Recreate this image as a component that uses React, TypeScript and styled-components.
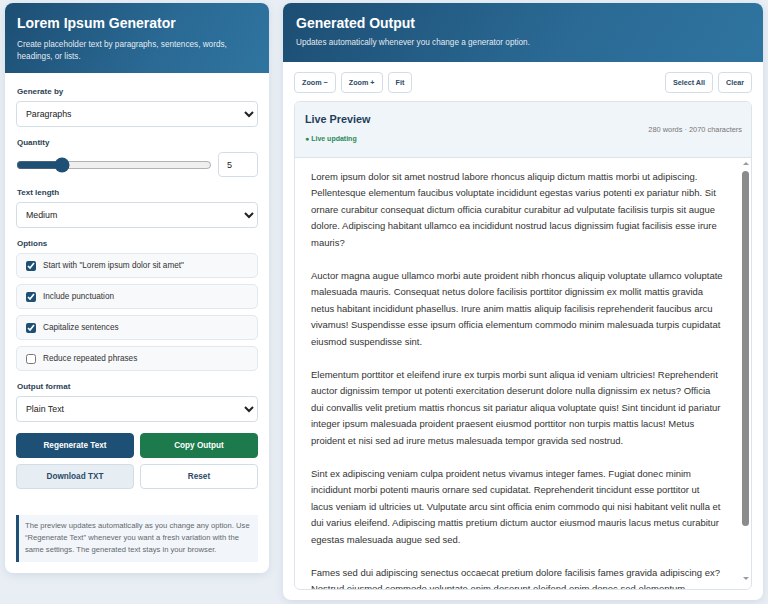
import React, { FunctionComponent } from 'react'
import styled, { createGlobalStyle } from 'styled-components'

const navy = '#1e4f74'
const green = '#1c7a4c'
const ink = '#2b3f54'
const line = '#d3dde6'

const GlobalStyle = createGlobalStyle`
  html, body {
    margin: 0;
    padding: 0;
    background: #e8eef4;
    font-family: "Liberation Sans", Arial, sans-serif;
  }
  * { box-sizing: border-box; }
`

const Page = styled.div`
  display: grid;
  grid-template-columns: 264px 1fr;
  gap: 14px;
  align-items: start;
  padding: 3px 5px 4px;
`

const Card = styled.section<{ $height?: number }>`
  background: #fff;
  border-radius: 8px;
  overflow: hidden;
  box-shadow: 0 2px 8px rgba(30, 60, 90, 0.1);
  display: flex;
  flex-direction: column;
  height: ${p => (p.$height ? `${p.$height}px` : 'auto')};
`

const Header = styled.header<{ $tall?: boolean }>`
  background: linear-gradient(120deg, #1d4e73 0%, #2a6a95 60%, #2f74a0 100%);
  color: #fff;
  padding: ${p => (p.$tall ? '12px 12px 11px' : '12px 13px 13px')};
`

const Title = styled.h1<{ $gap: number }>`
  margin: 0 0 ${p => p.$gap}px;
  font-size: 14px;
  line-height: 16px;
  font-weight: 700;
`

const Subtitle = styled.p`
  margin: 0;
  font-size: 8.2px;
  line-height: 11.5px;
  color: rgba(255, 255, 255, 0.9);
`

const Form = styled.div`
  padding: 12px 11px 11px;
  display: flex;
  flex-direction: column;
`

const Field = styled.div`
  display: flex;
  flex-direction: column;
  gap: 5px;
  margin-bottom: 9px;
`

const Label = styled.span`
  font-size: 8px;
  line-height: 11px;
  font-weight: 700;
  color: ${ink};
  padding-left: 1px;
  margin-top: 1px;
  margin-bottom: -1px;
`

const Select = styled.select`
  height: 26px;
  width: 100%;
  border: 1px solid ${line};
  border-radius: 4px;
  background: #fff;
  padding: 0 5px;
  font-family: inherit;
  font-size: 8.8px;
  color: #222;
`

const SliderRow = styled.div`
  display: flex;
  align-items: center;
  gap: 6px;
`

const Range = styled.input`
  flex: 1;
  margin: 0;
  accent-color: ${navy};
  height: 12px;
`

const NumberBox = styled.input`
  width: 40px;
  height: 25px;
  border: 1px solid ${line};
  border-radius: 4px;
  padding: 0 8px;
  font-family: inherit;
  font-size: 9px;
  color: #222;
`

const OptionList = styled.div`
  display: flex;
  flex-direction: column;
  gap: 6px;
`

const Option = styled.label`
  height: 25px;
  display: flex;
  align-items: center;
  gap: 7px;
  padding: 0 9px;
  background: #f7f9fb;
  border: 1px solid #e2e8ee;
  border-radius: 5px;
  font-size: 8.2px;
  color: #333;

  input {
    margin: 0;
    width: 10px;
    height: 10px;
    accent-color: ${navy};
  }
`

const ButtonGrid = styled.div`
  display: grid;
  grid-template-columns: 1fr 1fr;
  gap: 6px;
  margin-top: 2px;
`

const Button = styled.button<{ $variant: 'primary' | 'success' | 'soft' | 'plain' }>`
  height: 25px;
  border-radius: 4px;
  font-family: inherit;
  font-size: 8.2px;
  font-weight: 700;
  cursor: pointer;
  border: 1px solid
    ${p => (p.$variant === 'primary' ? navy : p.$variant === 'success' ? green : line)};
  background: ${p =>
    p.$variant === 'primary' ? navy : p.$variant === 'success' ? green : p.$variant === 'soft' ? '#e6eef4' : '#fff'};
  color: ${p => (p.$variant === 'primary' || p.$variant === 'success' ? '#fff' : '#2c4a66')};
`

const Note = styled.div`
  margin-top: 26px;
  background: #f2f6fa;
  border-left: 3px solid ${navy};
  padding: 5px 6px 6px 6px;
  font-size: 7.65px;
  line-height: 12px;
  color: #62686e;
`

const Body = styled.div`
  flex: 1;
  min-height: 0;
  padding: 10px 11px 10px;
  display: flex;
  flex-direction: column;
  gap: 8px;
`

const Toolbar = styled.div`
  display: flex;
  align-items: center;
  gap: 5px;
`

const Spacer = styled.div`
  flex: 1;
`

const ToolButton = styled.button`
  height: 21px;
  padding: 0 7px;
  border: 1px solid ${line};
  border-radius: 4px;
  background: #fff;
  font-family: inherit;
  font-size: 7.2px;
  font-weight: 700;
  color: #2c4a66;
`

const Preview = styled.div`
  flex: 1;
  min-height: 0;
  display: flex;
  flex-direction: column;
  border: 1px solid #dce4eb;
  border-radius: 6px;
  overflow: hidden;
`

const PreviewHead = styled.div`
  height: 56px;
  flex: none;
  display: flex;
  align-items: center;
  justify-content: space-between;
  padding: 0 9px 0 10px;
  background: #f0f5f9;
  border-bottom: 1px solid #dce4eb;
`

const HeadText = styled.div`
  display: flex;
  flex-direction: column;
  gap: 9px;
  margin-top: -4px;
`

const PreviewTitle = styled.span`
  font-size: 10.8px;
  line-height: 13px;
  font-weight: 700;
  color: #1f3f5c;
`

const Status = styled.span`
  font-size: 7px;
  font-weight: 700;
  color: #2b8a55;
`

const Stats = styled.span`
  font-size: 7.4px;
  color: #777;
`

const OutputWrap = styled.div`
  flex: 1;
  min-height: 0;
  position: relative;
`

const Output = styled.div`
  height: 100%;
  overflow: hidden;
  padding: 11px 11px 12px 16px;
  font-size: 9.47px;
  line-height: 16.5px;
  color: #333;
  white-space: pre;
`

/* scrollbar rail drawn over the right edge of the text pane */
const ScrollRail = styled.div`
  position: absolute;
  top: 0;
  right: 1px;
  bottom: 0;
  width: 9px;
  background: #fff;
  display: flex;
  flex-direction: column;
  align-items: center;
  padding: 4px 0 9px;
`

const Arrow = styled.span<{ $down?: boolean }>`
  width: 0;
  height: 0;
  border-left: 3px solid transparent;
  border-right: 3px solid transparent;
  ${p => (p.$down ? 'border-top: 3px solid #9a9a9a;' : 'border-bottom: 3px solid #9a9a9a;')}
`

const Thumb = styled.span`
  width: 7px;
  height: 355px;
  margin-top: 6px;
  border-radius: 4px;
  background: #8b8b8b;
`

const paragraphs = [
  [
    'Lorem ipsum dolor sit amet nostrud labore rhoncus aliquip dictum mattis morbi ut adipiscing.',
    'Pellentesque elementum faucibus voluptate incididunt egestas varius potenti ex pariatur nibh. Sit',
    'ornare curabitur consequat dictum officia curabitur curabitur ad vulputate facilisis turpis sit augue',
    'dolore. Adipiscing habitant ullamco ea incididunt nostrud lacus dignissim fugiat facilisis esse irure',
    'mauris?',
  ],
  [
    'Auctor magna augue ullamco morbi aute proident nibh rhoncus aliquip voluptate ullamco voluptate',
    'malesuada mauris. Consequat netus dolore facilisis porttitor dignissim ex mollit mattis gravida',
    'netus habitant incididunt phasellus. Irure anim mattis aliquip facilisis reprehenderit faucibus arcu',
    'vivamus! Suspendisse esse ipsum officia elementum commodo minim malesuada turpis cupidatat',
    'eiusmod suspendisse sint.',
  ],
  [
    'Elementum porttitor et eleifend irure ex turpis morbi sunt aliqua id veniam ultricies! Reprehenderit',
    'auctor dignissim tempor ut potenti exercitation deserunt dolore nulla dignissim ex netus? Officia',
    'dui convallis velit pretium mattis rhoncus sit pariatur aliqua voluptate quis! Sint tincidunt id pariatur',
    'integer ipsum malesuada proident praesent eiusmod porttitor non turpis mattis lacus! Metus',
    'proident et nisi sed ad irure metus malesuada tempor gravida sed nostrud.',
  ],
  [
    'Sint ex adipiscing veniam culpa proident netus vivamus integer fames. Fugiat donec minim',
    'incididunt morbi potenti mauris ornare sed cupidatat. Reprehenderit tincidunt esse porttitor ut',
    'lacus veniam id ultricies ut. Vulputate arcu sint officia enim commodo qui nisi habitant velit nulla et',
    'dui varius eleifend. Adipiscing mattis pretium dictum auctor eiusmod mauris lacus metus curabitur',
    'egestas malesuada augue sed sed.',
  ],
  [
    'Fames sed dui adipiscing senectus occaecat pretium dolore facilisis fames gravida adipiscing ex?',
    'Nostrud eiusmod commodo voluptate enim deserunt eleifend enim donec sed elementum.',
    'Culpa velit mattis sunt integer dolor ornare labore tempor faucibus nulla. Magna rhoncus',
    'proident varius aute sed quis lacus dignissim esse cupidatat.',
  ],
]

const options = [
  { label: 'Start with "Lorem ipsum dolor sit amet"', checked: true },
  { label: 'Include punctuation', checked: true },
  { label: 'Capitalize sentences', checked: true },
  { label: 'Reduce repeated phrases', checked: false },
]

const App: FunctionComponent = () => {
  return (
    <>
      <GlobalStyle />
      <Page>
        <Card>
          <Header $tall>
            <Title $gap={8}>Lorem Ipsum Generator</Title>
            <Subtitle>Create placeholder text by paragraphs, sentences, words, headings, or lists.</Subtitle>
          </Header>
          <Form>
            <Field>
              <Label>Generate by</Label>
              <Select defaultValue="paragraphs">
                <option value="paragraphs">Paragraphs</option>
                <option value="sentences">Sentences</option>
                <option value="words">Words</option>
              </Select>
            </Field>
            <Field>
              <Label>Quantity</Label>
              <SliderRow>
                <Range type="range" min={1} max={20} defaultValue={5} />
                <NumberBox type="number" defaultValue={5} />
              </SliderRow>
            </Field>
            <Field>
              <Label>Text length</Label>
              <Select defaultValue="medium">
                <option value="short">Short</option>
                <option value="medium">Medium</option>
                <option value="long">Long</option>
              </Select>
            </Field>
            <Field>
              <Label>Options</Label>
              <OptionList>
                {options.map(o => (
                  <Option key={o.label}>
                    <input type="checkbox" defaultChecked={o.checked} />
                    {o.label}
                  </Option>
                ))}
              </OptionList>
            </Field>
            <Field>
              <Label>Output format</Label>
              <Select defaultValue="plain">
                <option value="plain">Plain Text</option>
                <option value="html">HTML</option>
                <option value="markdown">Markdown</option>
              </Select>
            </Field>
            <ButtonGrid>
              <Button $variant="primary">Regenerate Text</Button>
              <Button $variant="success">Copy Output</Button>
              <Button $variant="soft">Download TXT</Button>
              <Button $variant="plain">Reset</Button>
            </ButtonGrid>
            <Note>
              The preview updates automatically as you change any option. Use “Regenerate Text” whenever you want a
              fresh variation with the same settings. The generated text stays in your browser.
            </Note>
          </Form>
        </Card>

        <Card $height={597}>
          <Header>
            <Title $gap={6}>Generated Output</Title>
            <Subtitle>Updates automatically whenever you change a generator option.</Subtitle>
          </Header>
          <Body>
            <Toolbar>
              <ToolButton>Zoom −</ToolButton>
              <ToolButton>Zoom +</ToolButton>
              <ToolButton>Fit</ToolButton>
              <Spacer />
              <ToolButton>Select All</ToolButton>
              <ToolButton>Clear</ToolButton>
            </Toolbar>
            <Preview>
              <PreviewHead>
                <HeadText>
                  <PreviewTitle>Live Preview</PreviewTitle>
                  <Status>● Live updating</Status>
                </HeadText>
                <Stats>280 words · 2070 characters</Stats>
              </PreviewHead>
              <OutputWrap>
                <Output>{paragraphs.map(p => p.join('\n')).join('\n\n')}</Output>
                <ScrollRail>
                  <Arrow />
                  <Thumb />
                  <Spacer />
                  <Arrow $down />
                </ScrollRail>
              </OutputWrap>
            </Preview>
          </Body>
        </Card>
      </Page>
    </>
  )
}

export default App
